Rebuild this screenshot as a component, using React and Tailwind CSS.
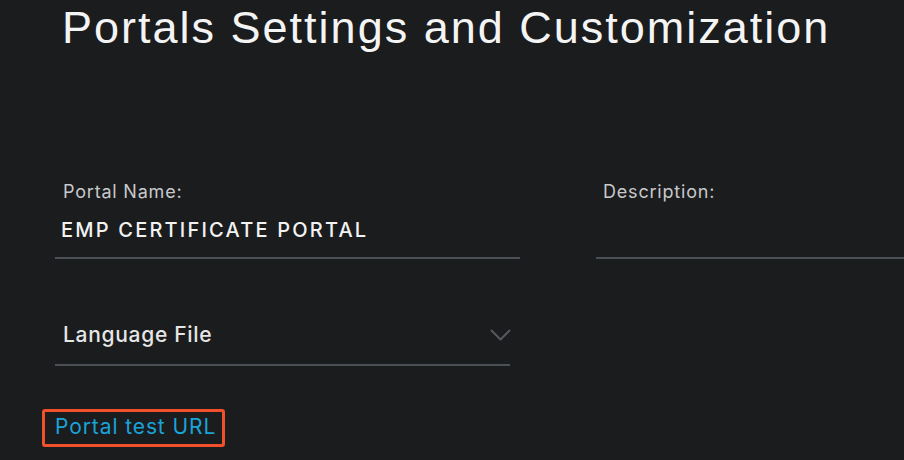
const Chevron = () => (
  <svg width="21" height="13" viewBox="0 0 21 13" fill="none" className="mr-[-1px]">
    <polyline points="1.5,1.5 10.5,10.5 19.5,1.5" stroke="#55595e" strokeWidth="2" strokeLinecap="round" strokeLinejoin="round" />
  </svg>
);

const App = () => {
  return (
    <div
      className="w-[904px] h-[460px] overflow-hidden bg-[#1b1c1e] text-white"
      style={{ fontFamily: 'Inter, "Liberation Sans", sans-serif' }}
    >
      <h1
        className="pl-[62px] pt-[3px] text-[45px] leading-[50px] tracking-[2px] text-[#f4f4f4]"
        style={{ fontFamily: '"Liberation Sans", Arial, sans-serif' }}
      >
        Portals Settings and Customization
      </h1>

      {/* Name and description */}
      <div className="mt-[128px] flex pl-[55px] gap-[76px]">
        <div className="w-[465px]">
          <div className="pl-[8px] text-[18px] leading-[22px] tracking-[0.8px] text-[#c8c9ca]">Portal Name:</div>
          <div className="pl-[6px] pt-[16px] pb-[16px] text-[20px] leading-[22px] tracking-[2.2px] font-medium text-[#f2f2f2]">
            EMP CERTIFICATE PORTAL
          </div>
          <div className="h-[2px] bg-[#4b5056]" />
        </div>
        <div className="flex-1">
          <div className="pl-[7px] text-[18px] leading-[22px] tracking-[0.8px] text-[#c8c9ca]">Description:</div>
          <div className="h-[54px]" />
          <div className="h-[2px] bg-[#4b5056]" />
        </div>
      </div>

      {/* Language file select */}
      <div className="mt-[64px] ml-[55px] w-[455px]">
        <div className="flex items-center justify-between pl-[8px] pb-[17px]">
          <span className="text-[21px] leading-[24px] tracking-[0.7px] font-medium text-[#e6e6e6]">Language File</span>
          <Chevron />
        </div>
        <div className="h-[2px] bg-[#4b5056]" />
      </div>

      {/* Test link */}
      <div className="mt-[43px] ml-[42px] inline-block border-[3px] border-[#f2502a] rounded-[3px] pl-[10px] pr-[6px] pt-[3px] pb-[4px]">
        <a href="#" className="text-[21px] leading-[24px] tracking-[0.9px] text-[#1aa3d8]">
          Portal test URL
        </a>
      </div>
    </div>
  );
};

export default App;
